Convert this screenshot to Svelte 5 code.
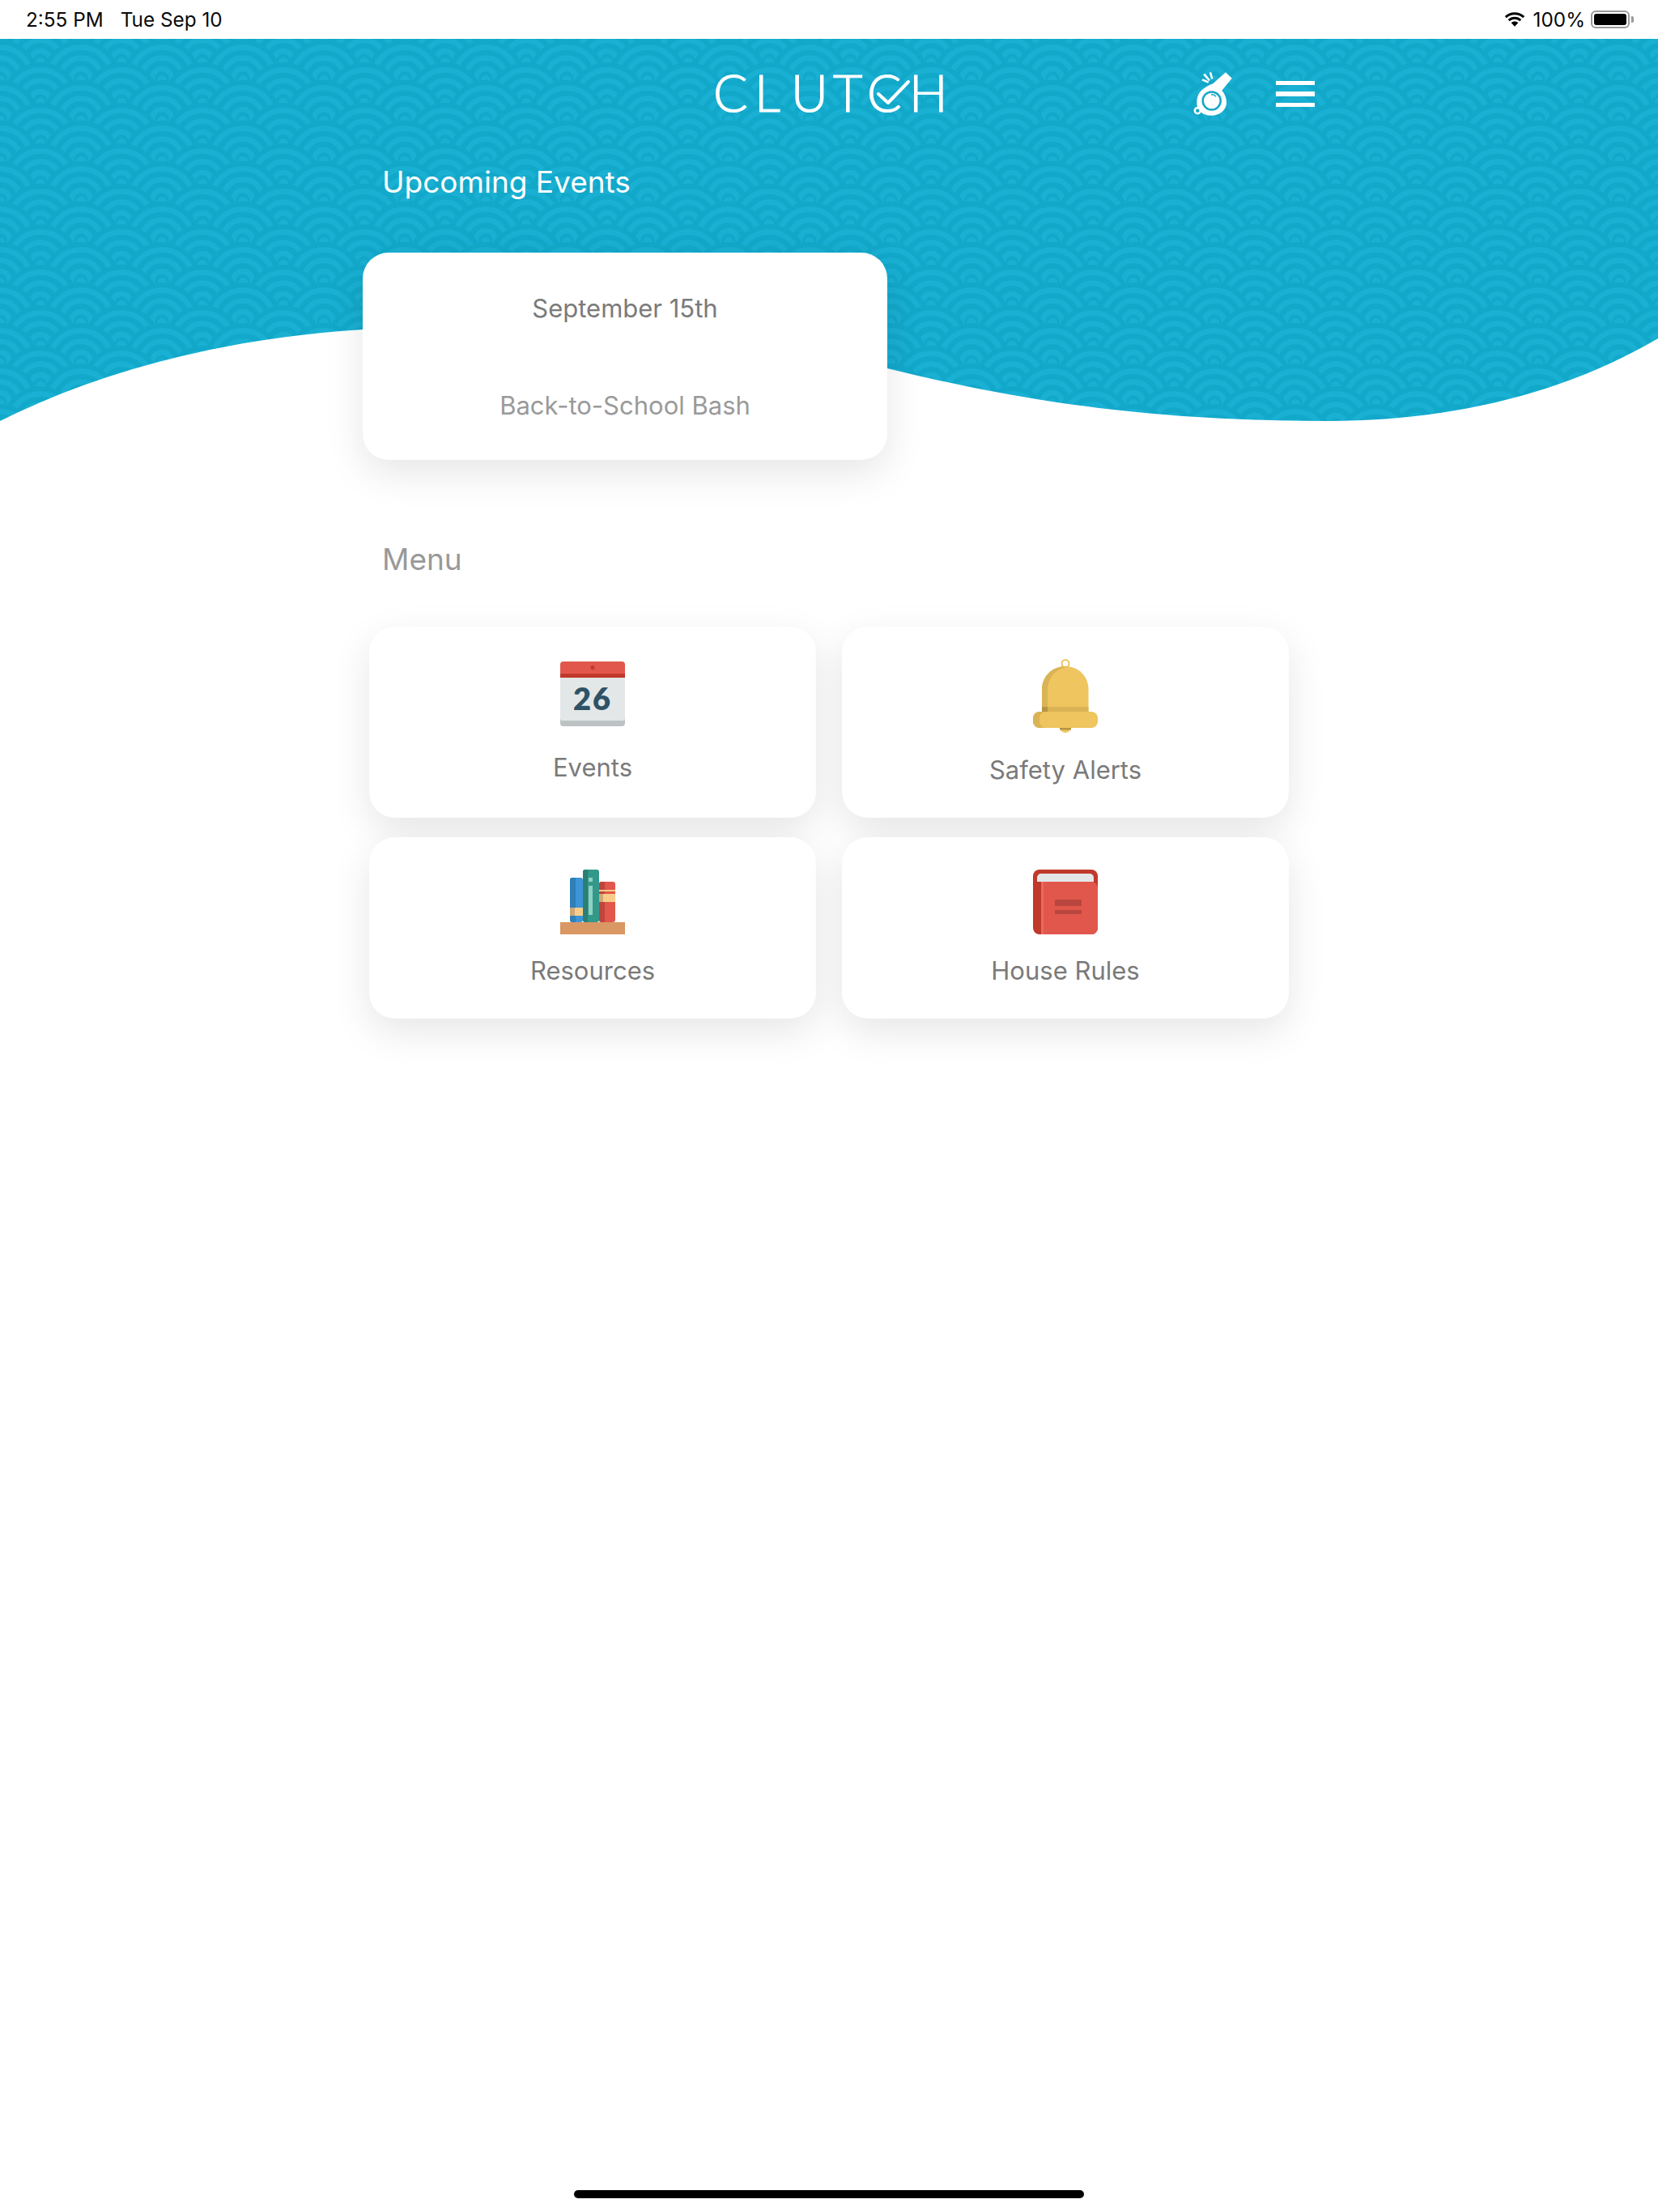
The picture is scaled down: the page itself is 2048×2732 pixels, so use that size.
<script>
  const rows = [
    ...[-53,-3,47,97,147].map(y => ({ y, xs: [0,100] })),
    ...[-25,25,75,125].map(y => ({ y, xs: [50] }))
  ].sort((a,b) => a.y - b.y);
  const menu = [
    { label: 'Events', icon: 'cal' },
    { label: 'Safety Alerts', icon: 'bell' },
    { label: 'Resources', icon: 'books' },
    { label: 'House Rules', icon: 'book' }
  ];
</script>

<div class="page">
  <svg class="wave" width="2048" height="530" viewBox="0 0 2048 530" aria-hidden="true">
    <defs>
      <g id="scale">
        <circle r="48" fill="#12a8ca"/>
        <circle r="38.6" fill="none" stroke="#19b0d3" stroke-width="6.7"/>
        <circle r="25.3" fill="none" stroke="#19b0d3" stroke-width="6.7"/>
        <circle r="12" fill="none" stroke="#19b0d3" stroke-width="6.7"/>
        <circle cy="2" r="6" fill="#19b0d3"/>
      </g>
      <pattern id="seigaiha" width="100" height="50" patternUnits="userSpaceOnUse">
        {#each rows as row}
          {#each row.xs as x}
            <use href="#scale" {x} y={row.y}/>
          {/each}
        {/each}
      </pattern>
    </defs>
    <path d="M0 48H2048V418C1930 487 1790 520 1640 520C1400 520 1240 490 1096 455C900 408 650 395 448 407C280 418 130 455 0 520Z" fill="url(#seigaiha)"/>
  </svg>

  <header class="status">
    <div class="left"><span>2:55 PM</span><span>Tue Sep 10</span></div>
    <div class="right">
      <svg width="28" height="20" viewBox="0 0 28 20"><path d="M14 4.2c3.9 0 7.5 1.5 10.2 4l2-2.1C22.9 3 18.7 1.200 14 1.200S5.100 3 1.800 6.100l2 2.100c2.700-2.500 6.300-4 10.200-4z"/><path d="M14 9.800c2.400 0 4.600.9 6.300 2.400l2-2.100C20 8 17.200 6.800 14 6.800S8 8 5.700 10.100l2 2.100c1.700-1.500 3.900-2.400 6.300-2.400z"/><path d="M14 12.400c-1.700 0-3.200.6-4.400 1.700l4.400 4.700 4.400-4.700c-1.200-1.100-2.700-1.700-4.400-1.700z"/></svg>
      <span class="pct">100%</span>
      <div class="battery"><i></i></div>
    </div>
  </header>

  <div class="topbar">
    <div class="logo">
      <span class="c1">C</span><span class="l">L</span><span class="u">U</span><span class="t">T</span>
      <span class="checked">C<svg width="44" height="36" viewBox="0 0 44 36"><path d="M4 20L16 31L41 5" fill="none" stroke="#fff" stroke-width="4" stroke-linecap="round" stroke-linejoin="round"/></svg></span>
      <span class="h">H</span>
    </div>
    <svg class="whistle" width="50" height="58" viewBox="0 0 50 58">
      <path d="M40 1.300L47.700 8.700L35.300 23.700C39 28 41 33 41 38.700C41 48 32 54.700 22.700 54.700C11 54.700 4.300 48 4.300 38.700C4.300 30 8 25 12 22C16 19 20 17 24.300 15.300Z" fill="#fff"/>
      <circle cx="22.700" cy="36.500" r="11" fill="none" stroke="#12a8ca" stroke-width="2.500"/>
      <path d="M22 29c2.500-.6 4.500.2 6 2.200" fill="none" stroke="#12a8ca" stroke-width="1.500"/>
      <circle cx="5.300" cy="48.700" r="3.500" fill="#12a8ca" stroke="#fff" stroke-width="2.500"/>
      <path d="M11 10.300L18.700 13.700M13.300 3.700L20 11.300M21 1.300L23.300 9.300" stroke="#fff" stroke-width="2.500" fill="none"/>
    </svg>
    <div class="burger"><i></i><i></i><i></i></div>
  </div>

  <main class="content">
    <h2 class="upcoming">Upcoming Events</h2>
    <section class="event">
      <p class="date">September 15th</p>
      <p class="name">Back-to-School Bash</p>
    </section>
    <h2 class="menu-title">Menu</h2>
    <div class="grid">
      {#each menu as item}
        <button class="tile {item.icon}">
          <span class="ico">
            {#if item.icon === 'cal'}
              <svg width="80" height="80" viewBox="0 0 80 80"><path d="M0 20V4a4 4 0 0 1 4-4h72a4 4 0 0 1 4 4v16z" fill="#e2574c"/><rect y="15" width="80" height="5" fill="#c0392b"/><circle cx="40" cy="7.500" r="2.500" fill="#c0392b"/><path d="M0 20h80v56a4 4 0 0 1-4 4H4a4 4 0 0 1-4-4z" fill="#bdc3c4"/><path d="M0 20h80v50a3 3 0 0 1-3 3H3a3 3 0 0 1-3-3z" fill="#e3e7e8"/><text x="40" y="60" text-anchor="middle" class="num">26</text></svg>
            {:else if item.icon === 'bell'}
              <svg width="80" height="91" viewBox="0 0 80 91"><circle cx="40" cy="5.500" r="4.500" fill="none" stroke="#eec55e" stroke-width="2"/><path d="M11 66V38C11 21 24 9 40 9S68.500 21 68.500 38V66Z" fill="#eec55e"/><path d="M11 66V38C11 21 24 9 40 9c1.500 0 3 .1 4 .3C29 11 18 23 18 38v28Z" fill="#d9b355"/><rect x="11" y="59" width="57.500" height="6" fill="#d9b355"/><rect x="11" y="59" width="7" height="6" fill="#b59544"/><path d="M33 84h14a7 7 0 0 1-14 0Z" fill="#eec55e"/><rect x="33" y="85" width="14" height="2.500" fill="#b59544"/><rect y="65" width="80" height="20" rx="8" fill="#eec55e"/><path d="M8 65h8a8 8 0 0 0-8 8v4a8 8 0 0 0 8 8H8a8 8 0 0 1-8-8v-4a8 8 0 0 1 8-8Z" fill="#d9b355"/></svg>
            {:else if item.icon === 'books'}
              <svg width="80" height="80" viewBox="0 0 80 80"><rect x="12" y="10" width="16" height="55" rx="3" fill="#3d95d8"/><path d="M15 10h4v55h-4a3 3 0 0 1-3-3V13a3 3 0 0 1 3-3z" fill="#2f7fb8"/><rect x="12" y="47" width="16" height="10" fill="#f9cc8b"/><rect x="12" y="47" width="6" height="10" fill="#cfa877"/><rect x="28" y="0" width="20" height="65" rx="3" fill="#32998a"/><path d="M31 0h3v65h-3a3 3 0 0 1-3-3V3a3 3 0 0 1 3-3z" fill="#2c7f74"/><rect x="35" y="10" width="5" height="5" fill="#8fd0c3"/><rect x="35" y="20" width="5" height="36" fill="#8fd0c3"/><rect x="48" y="15" width="20" height="50" rx="3" fill="#e2574c"/><path d="M51 15h4v50h-4a3 3 0 0 1-3-3V18a3 3 0 0 1 3-3z" fill="#c0453c"/><rect x="48" y="25" width="20" height="2" fill="#f9cc8b"/><rect x="48" y="30" width="20" height="10" fill="#f9cc8b"/><rect x="48" y="30" width="5" height="10" fill="#cfa877"/><rect y="65" width="80" height="15" fill="#d99764"/></svg>
            {:else}
              <svg width="80" height="80" viewBox="0 0 80 80"><rect width="80" height="80" rx="8" fill="#c0392b"/><path d="M10 5h60a5 5 0 0 1 5 5v5H5v-5a5 5 0 0 1 5-5z" fill="#e3e7e8"/><path d="M10 15h62a8 8 0 0 1 8 8v49a8 8 0 0 1-8 8H10Z" fill="#e2574c"/><rect x="10" y="15" width="3" height="65" fill="#e86a60"/><rect x="27" y="37" width="33" height="8" fill="#b8463f"/><rect x="27" y="50" width="33" height="5" fill="#b8463f"/></svg>
            {/if}
          </span>
          <span class="lab">{item.label}</span>
        </button>
      {/each}
    </div>
  </main>

  <div class="home"></div>
</div>

<style>
  :global(body) { margin: 0; background: #fff; }
  .page { position: relative; width: 2048px; height: 2732px; overflow: hidden; font-family: Inter, "Liberation Sans", sans-serif; background: #fff; }
  .wave { position: absolute; left: 0; top: 0; }
  .status { position: relative; height: 48px; display: flex; justify-content: space-between; align-items: center; padding: 0 35px 0 32px; font-size: 24.3px; color: #0a0a0a; }
  .left { display: flex; gap: 21px; }
  .right { display: flex; align-items: center; gap: 7px; }
  .right svg { margin-right: 2px; }
  .battery { width: 48px; height: 22px; border: 2px solid #999; border-radius: 6px; padding: 2px; box-sizing: border-box; position: relative; }
  .battery i { display: block; height: 100%; background: #000; border-radius: 3px; }
  .battery::after { content: ""; position: absolute; right: -7px; top: 5px; width: 3px; height: 8px; background: #999; border-radius: 0 2px 2px 0; }
  .topbar { position: relative; height: 152px; }
  .logo { position: absolute; left: 0; top: 30px; width: 100%; height: 72px; font-family: Lato, sans-serif; font-weight: 300; font-size: 63px; line-height: 72px; color: #fff; -webkit-text-stroke: 1.2px #fff; }
  .logo span { position: absolute; top: 0; }
  .c1 { left: 881px; }
  .l { left: 932px; }
  .u { left: 977px; }
  .t { left: 1029px; }
  .checked { left: 1071px; }
  .h { left: 1123px; }
  .checked svg { position: absolute; left: 10px; top: 18px; }
  .whistle { position: absolute; left: 1474px; top: 40px; }
  .burger { position: absolute; left: 1576px; top: 52px; width: 48px; display: flex; flex-direction: column; gap: 8px; }
  .burger i { display: block; height: 5.33px; background: #fff; }
  .content { position: relative; padding-left: 448px; width: 1160px; }
  .upcoming { margin: 0 0 0 24px; font-size: 37px; line-height: 50px; font-weight: 400; color: #fff; height: 66px; }
  .event { margin-top: 46px; width: 648px; height: 256px; box-sizing: border-box; background: #fff; border-radius: 32px; box-shadow: 0 16px 48px rgba(0,0,0,.1); text-align: center; padding-top: 49px; }
  .event p { margin: 0; font-size: 31px; line-height: 40px; }
  .date { color: #7a7a7a; }
  .name { color: #9a9a9a; margin-top: 80px !important; }
  .menu-title { margin: 0 0 0 24px; padding-top: 98px; font-size: 37px; line-height: 50px; font-weight: 400; color: #999; }
  .grid { margin: 58px 0 0 8px; display: grid; grid-template-columns: 552px 552px; grid-template-rows: 236px 224px; gap: 24px 32px; }
  .tile { border: 0; background: #fff; border-radius: 32px; box-shadow: 0 16px 48px rgba(0,0,0,.1); font: inherit; display: flex; flex-direction: column; align-items: center; justify-content: flex-start; padding: 40px 0 0; }
  .ico { display: block; }
  .ico svg { display: block; }
  .lab { font-size: 31px; line-height: 40px; color: #7a7a7a; margin-top: 25px; }
  .cal { padding-top: 43px; }
  .cal .lab { margin-top: 31px; }
  .bell .lab { margin-top: 26px; }
  .num { font: 800 38px Lato, sans-serif; fill: #2f5265; letter-spacing: 2px; }
  .home { position: absolute; left: 709px; top: 2705px; width: 630px; height: 10px; border-radius: 5px; background: #000; }
</style>
